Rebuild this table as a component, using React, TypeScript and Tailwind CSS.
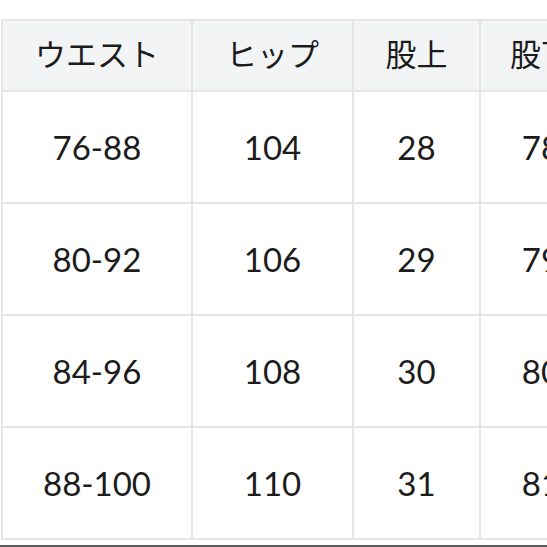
const headers = ['ウエスト', 'ヒップ', '股上', '股下'];

const rows = [
  ['76-88', '104', '28', '78'],
  ['80-92', '106', '29', '79'],
  ['84-96', '108', '30', '80'],
  ['88-100', '110', '31', '81'],
];

export default function App() {
  return (
    <div className="w-[547px] h-[547px] overflow-hidden bg-white relative font-['Lato','Noto_Sans_CJK_JP',sans-serif] text-[#1c1c1c]">
      <div className="pt-[19px] pl-[1px]">
        <div className="grid w-max grid-cols-[188px_159px_125px_120px] grid-rows-[69px_110px_110px_110px_110px] gap-[2px] p-[2px] bg-[#e6e6e8]">
          {headers.map(h => (
            <div
              key={h}
              className="bg-[#f3f4f6] flex items-center justify-center text-[31px] leading-none pb-[3px]"
            >
              {h}
            </div>
          ))}
          {rows.map(r =>
            r.map((v, i) => (
              <div
                key={`${r[0]}-${i}`}
                className="bg-white flex items-center justify-center text-[33px] leading-none"
              >
                {v}
              </div>
            ))
          )}
        </div>
      </div>
      <div className="absolute left-0 right-0 bottom-0 h-[2px] bg-[#5a5a5a]" />
    </div>
  );
}
